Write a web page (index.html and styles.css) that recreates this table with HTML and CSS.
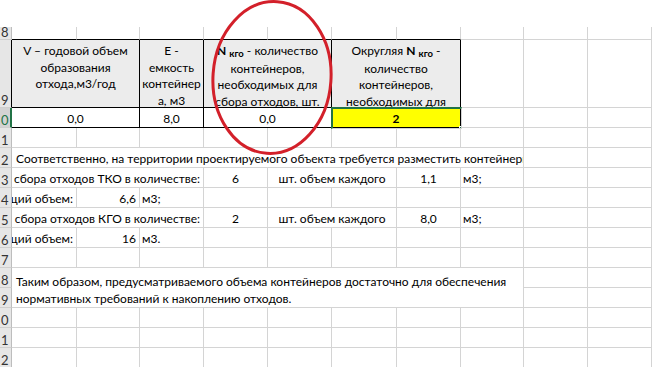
FILE: index.html
```html
<!DOCTYPE html>
<html lang="ru">
<head>
<meta charset="utf-8">
<title>Расчет контейнеров</title>
<link rel="stylesheet" href="styles.css">
</head>
<body>
<div class="sheet">
  <div class="top"></div>

  <div class="rh">8</div>
  <div class="bt"></div><div class="bt"></div><div class="bt"></div><div class="bt"></div><div class="bt"></div><div class="bt"></div><div class="bt"></div><div></div><div></div><div></div>

  <div class="rh edge">9</div>
  <div class="th s2"><span>V – годовой объем</span><span>образования</span><span>отхода,м3/год</span></div>
  <div class="th"><span>E -</span><span>емкость</span><span>контейнер</span><span>а, м3</span></div>
  <div class="th s2"><span><b>N</b> <b class="sub">кго</b> - количество</span><span>контейнеров,</span><span>необходимых для</span><span>сбора отходов, шт.</span></div>
  <div class="th s2"><span>Округляя <b>N</b> <b class="sub">кго</b> -</span><span>количество</span><span>контейнеров,</span><span>необходимых для</span><span>сбора отходов, шт.</span></div>
  <div></div><div></div><div></div>

  <div class="rh active">0</div>
  <div class="td s2">0,0</div>
  <div class="td">8,0</div>
  <div class="td s2">0,0</div>
  <div class="td s2 yellow">2</div>
  <div></div><div></div><div></div>

  <div class="rh">1</div>
  <div></div><div></div><div></div><div></div><div></div><div></div><div></div><div></div><div></div><div></div>

  <div class="rh">2</div>
  <div class="txt s8">Соответственно, на территории проектируемого объекта требуется разместить контейнеры</div>
  <div></div><div></div>

  <div class="rh">3</div>
  <div class="right s3">для сбора отходов ТКО в количестве:</div>
  <div class="mid">6</div>
  <div class="mid s2">шт. объем каждого</div>
  <div class="mid">1,1</div>
  <div class="left">м3;</div>
  <div></div><div></div>

  <div class="rh">4</div>
  <div class="right">общий объем:</div>
  <div class="right">6,6</div>
  <div class="left">м3;</div>
  <div></div><div></div><div></div><div></div><div></div><div></div><div></div>

  <div class="rh">5</div>
  <div class="right s3">для сбора отходов КГО в количестве:</div>
  <div class="mid">2</div>
  <div class="mid s2">шт. объем каждого</div>
  <div class="mid">8,0</div>
  <div class="left">м3;</div>
  <div></div><div></div>

  <div class="rh">6</div>
  <div class="right">общий объем:</div>
  <div class="right">16</div>
  <div class="left">м3.</div>
  <div></div><div></div><div></div><div></div><div></div><div></div><div></div>

  <div class="rh">7</div>
  <div></div><div></div><div></div><div></div><div></div><div></div><div></div><div></div><div></div><div></div>

  <div class="rh">8</div>
  <div class="txt2 s8"><span>Таким образом, предусматриваемого объема контейнеров достаточно для обеспечения</span><span>нормативных требований к накоплению отходов.</span></div>
  <div></div><div></div>

  <div class="rh">9</div>
  <div></div><div></div>

  <div class="rh">0</div>
  <div></div><div></div><div></div><div></div><div></div><div></div><div></div><div></div><div></div><div></div>

  <div class="rh">1</div>
  <div></div><div></div><div></div><div></div><div></div><div></div><div></div><div></div><div></div><div></div>

  <div class="rh">2</div>
  <div></div><div></div><div></div><div></div><div></div><div></div><div></div><div></div><div></div><div></div>

  <div class="sel"><div class="handle"></div></div>
  <svg class="mark" width="652" height="367" viewBox="0 0 652 367">
    <ellipse cx="272" cy="77.5" rx="59" ry="76" transform="rotate(4 272 77.5)" fill="none" stroke="#d3202a" stroke-width="3"/>
  </svg>
</div>
</body>
</html>
```

FILE: styles.css
```css
html, body {
  margin: 0;
  padding: 0;
  background: #fff;
}
body {
  width: 652px;
  height: 367px;
  overflow: hidden;
  font-family: Lato, "Noto Sans", sans-serif;
  font-size: 12px;
  color: #000;
}
.sheet {
  position: relative;
  display: grid;
  grid-template-columns: 12px 65px 63px 64px 64px 64px 65px 64px 63px 64px 64px;
  grid-template-rows: 27px 13px 68px 20px repeat(12, 20px);
}
.sheet > div {
  box-sizing: border-box;
  border-right: 1px solid #d4d4d4;
  border-bottom: 1px solid #d4d4d4;
  overflow: hidden;
  white-space: nowrap;
  display: flex;
  align-items: flex-end;
  line-height: 17px;
}
.sheet > .top {
  grid-column: 1 / -1;
  border: none;
}
.sheet > .rh {
  background: #e6e6e6;
  border-right-color: #bdbdbd;
  border-bottom-color: #cfcfcf;
  padding-left: 1px;
  padding-bottom: 1px;
  font-size: 13px;
  line-height: 12px;
  color: #333;
}
.sheet > .rh.edge {
  border-right-color: #000;
}
.sheet > .rh.active {
  background: #d3d3d3;
  color: #217346;
  border-right: 2px solid #217346;
}
.s2 { grid-column: span 2; }
.s3 { grid-column: span 3; }
.s8 { grid-column: span 8; }
.sheet > .bt {
  border-bottom-color: #000;
}
.sheet > .th {
  background: #ececec;
  border-right-color: #000;
  border-bottom-color: #000;
  flex-direction: column;
  align-items: center;
  justify-content: flex-start;
  padding-top: 3px;
  line-height: 16.6px;
}
.sub {
  font-size: 9.5px;
  position: relative;
  top: 2px;
}
.sheet > .td {
  border-right-color: #000;
  border-bottom-color: #000;
  justify-content: center;
}
.sheet > .yellow {
  background: #ffff00;
  font-weight: bold;
}
.sheet > .txt {
  padding-left: 4px;
}
.sheet > .txt2 {
  grid-row: span 2;
  flex-direction: column;
  justify-content: flex-end;
  align-items: flex-start;
  padding-left: 4px;
}
.sheet > .right {
  justify-content: flex-end;
  padding-right: 3px;
}
.sheet > .mid {
  justify-content: center;
}
.sheet > .left {
  padding-left: 2px;
}
.sel {
  position: absolute;
  left: 331px;
  top: 107px;
  width: 131px;
  height: 22px;
  box-sizing: border-box;
  border: 2px solid #217346;
}
.handle {
  position: absolute;
  right: -5px;
  bottom: -5px;
  width: 5px;
  height: 5px;
  background: #217346;
  border: 1px solid #fff;
}
.mark {
  position: absolute;
  left: 0;
  top: 0;
  pointer-events: none;
}
```
